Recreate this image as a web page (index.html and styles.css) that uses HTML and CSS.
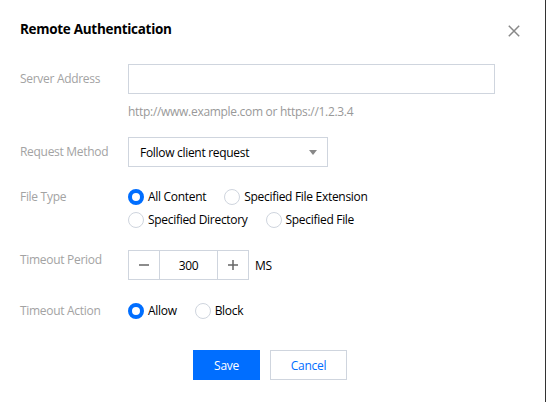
FILE: index.html
```html
<!DOCTYPE html>
<html lang="en">
<head>
<meta charset="utf-8">
<title>Remote Authentication</title>
<link rel="stylesheet" href="styles.css">
</head>
<body>
<div class="dialog">
  <div class="header">
    <div class="title">Remote Authentication</div>
    <button class="close" aria-label="Close">
      <svg width="12" height="12" viewBox="0 0 12 12"><path d="M0.8 0.8 L11.2 11.2 M11.2 0.8 L0.8 11.2" stroke="#888" stroke-width="1.5" fill="none"/></svg>
    </button>
  </div>

  <div class="form">
    <div class="row row-input">
      <div class="label label-mid">Server Address</div>
      <div class="control">
        <div class="text-input"></div>
        <div class="hint">http://www.example.com or https://1.2.3.4</div>
      </div>
    </div>

    <div class="row row-select">
      <div class="label label-mid">Request Method</div>
      <div class="control">
        <div class="select">
          <span>Follow client request</span>
          <span class="caret"></span>
        </div>
      </div>
    </div>

    <div class="row row-filetype">
      <div class="label">File Type</div>
      <div class="control radios">
        <div class="radio-line">
          <span class="radio checked"></span><span class="opt">All Content</span>
          <span class="radio"></span><span class="opt">Specified File Extension</span>
        </div>
        <div class="radio-line">
          <span class="radio"></span><span class="opt">Specified Directory</span>
          <span class="radio"></span><span class="opt">Specified File</span>
        </div>
      </div>
    </div>

    <div class="row row-stepper">
      <div class="label">Timeout Period</div>
      <div class="control stepper-wrap">
        <div class="stepper">
          <span class="step-btn">
            <svg width="10" height="10" viewBox="0 0 10 10"><path d="M0 5 H10" stroke="#666" stroke-width="1.5"/></svg>
          </span>
          <span class="step-val">300</span>
          <span class="step-btn">
            <svg width="10" height="10" viewBox="0 0 10 10"><path d="M0 5 H10 M5 0 V10" stroke="#666" stroke-width="1.5"/></svg>
          </span>
        </div>
        <span class="unit">MS</span>
      </div>
    </div>

    <div class="row row-action">
      <div class="label">Timeout Action</div>
      <div class="control radios">
        <div class="radio-line">
          <span class="radio checked"></span><span class="opt">Allow</span>
          <span class="radio"></span><span class="opt">Block</span>
        </div>
      </div>
    </div>
  </div>

  <div class="footer">
    <button class="btn btn-primary">Save</button>
    <button class="btn btn-default">Cancel</button>
  </div>
</div>
</body>
</html>
```

FILE: styles.css
```css
* { box-sizing: border-box; }
html, body { margin: 0; padding: 0; background: #fff; }
body {
  font-family: "Open Sans", "Noto Sans", "Liberation Sans", sans-serif;
  font-size: 12px;
  letter-spacing: -0.3px;
  color: #000;
}
.dialog {
  width: 546px;
  height: 402px;
  border-right: 1px solid #333;
  padding: 0 20px;
}
.header {
  display: flex;
  justify-content: space-between;
  align-items: center;
  padding-top: 19px;
  height: 39px;
}
.title {
  font-size: 13.5px;
  font-weight: 700;
  line-height: 20px;
  color: #000;
  letter-spacing: -0.3px;
}
.close {
  border: 0;
  background: none;
  padding: 0;
  width: 12px;
  height: 12px;
  margin: 4px 5px 0 0;
  display: flex;
}
.form {
  padding-top: 25px;
}
.row {
  display: flex;
  align-items: flex-start;
}
.label {
  width: 108px;
  flex: none;
  color: #a3a3a3;
  line-height: 20px;
}
.label-mid { line-height: 30px; }
.control { flex: 1; }

.text-input {
  width: 367px;
  height: 30px;
  border: 1px solid #cfd5de;
}
.hint {
  margin-top: 8px;
  line-height: 20px;
  color: #999;
}
.row-select { margin-top: 15px; }
.select {
  width: 200px;
  height: 30px;
  border: 1px solid #cfd5de;
  display: flex;
  align-items: center;
  justify-content: space-between;
  padding: 0 10px 0 11px;
}
.caret {
  width: 0; height: 0;
  border-left: 4px solid transparent;
  border-right: 4px solid transparent;
  border-top: 5px solid #888;
}
.row-filetype { margin-top: 20px; }
.radios { display: flex; flex-direction: column; gap: 3px; }
.radio-line {
  display: flex;
  align-items: center;
  line-height: 20px;
}
.radio {
  width: 16px;
  height: 16px;
  border-radius: 50%;
  border: 1px solid #cfd5de;
  flex: none;
  margin-right: 4px;
}
.radio.checked { border: 4px solid #006eff; }
.opt { margin-right: 18px; color: #000; }

.row-stepper { margin-top: 20px; }
.stepper-wrap { display: flex; align-items: center; }
.stepper {
  display: flex;
  height: 30px;
  border: 1px solid #cfd5de;
}
.step-btn {
  width: 30px;
  display: flex;
  align-items: center;
  justify-content: center;
}
.step-btn svg { display: block; }
.step-val {
  width: 59px;
  border-left: 1px solid #cfd5de;
  border-right: 1px solid #cfd5de;
  display: flex;
  align-items: center;
  justify-content: center;
}
.unit { margin-left: 6px; }

.row-action { margin-top: 21px; }

.footer {
  display: flex;
  justify-content: center;
  gap: 10px;
  padding-right: 5px;
  margin-top: 29px;
}
.btn {
  height: 30px;
  font-family: inherit;
  font-size: 12px;
  letter-spacing: -0.3px;
  padding: 0;
  cursor: pointer;
}
.btn-primary {
  width: 67px;
  background: #006eff;
  color: #fff;
  border: 1px solid #006eff;
}
.btn-default {
  width: 77px;
  background: #fff;
  color: #006eff;
  border: 1px solid #cfd5de;
}
```
